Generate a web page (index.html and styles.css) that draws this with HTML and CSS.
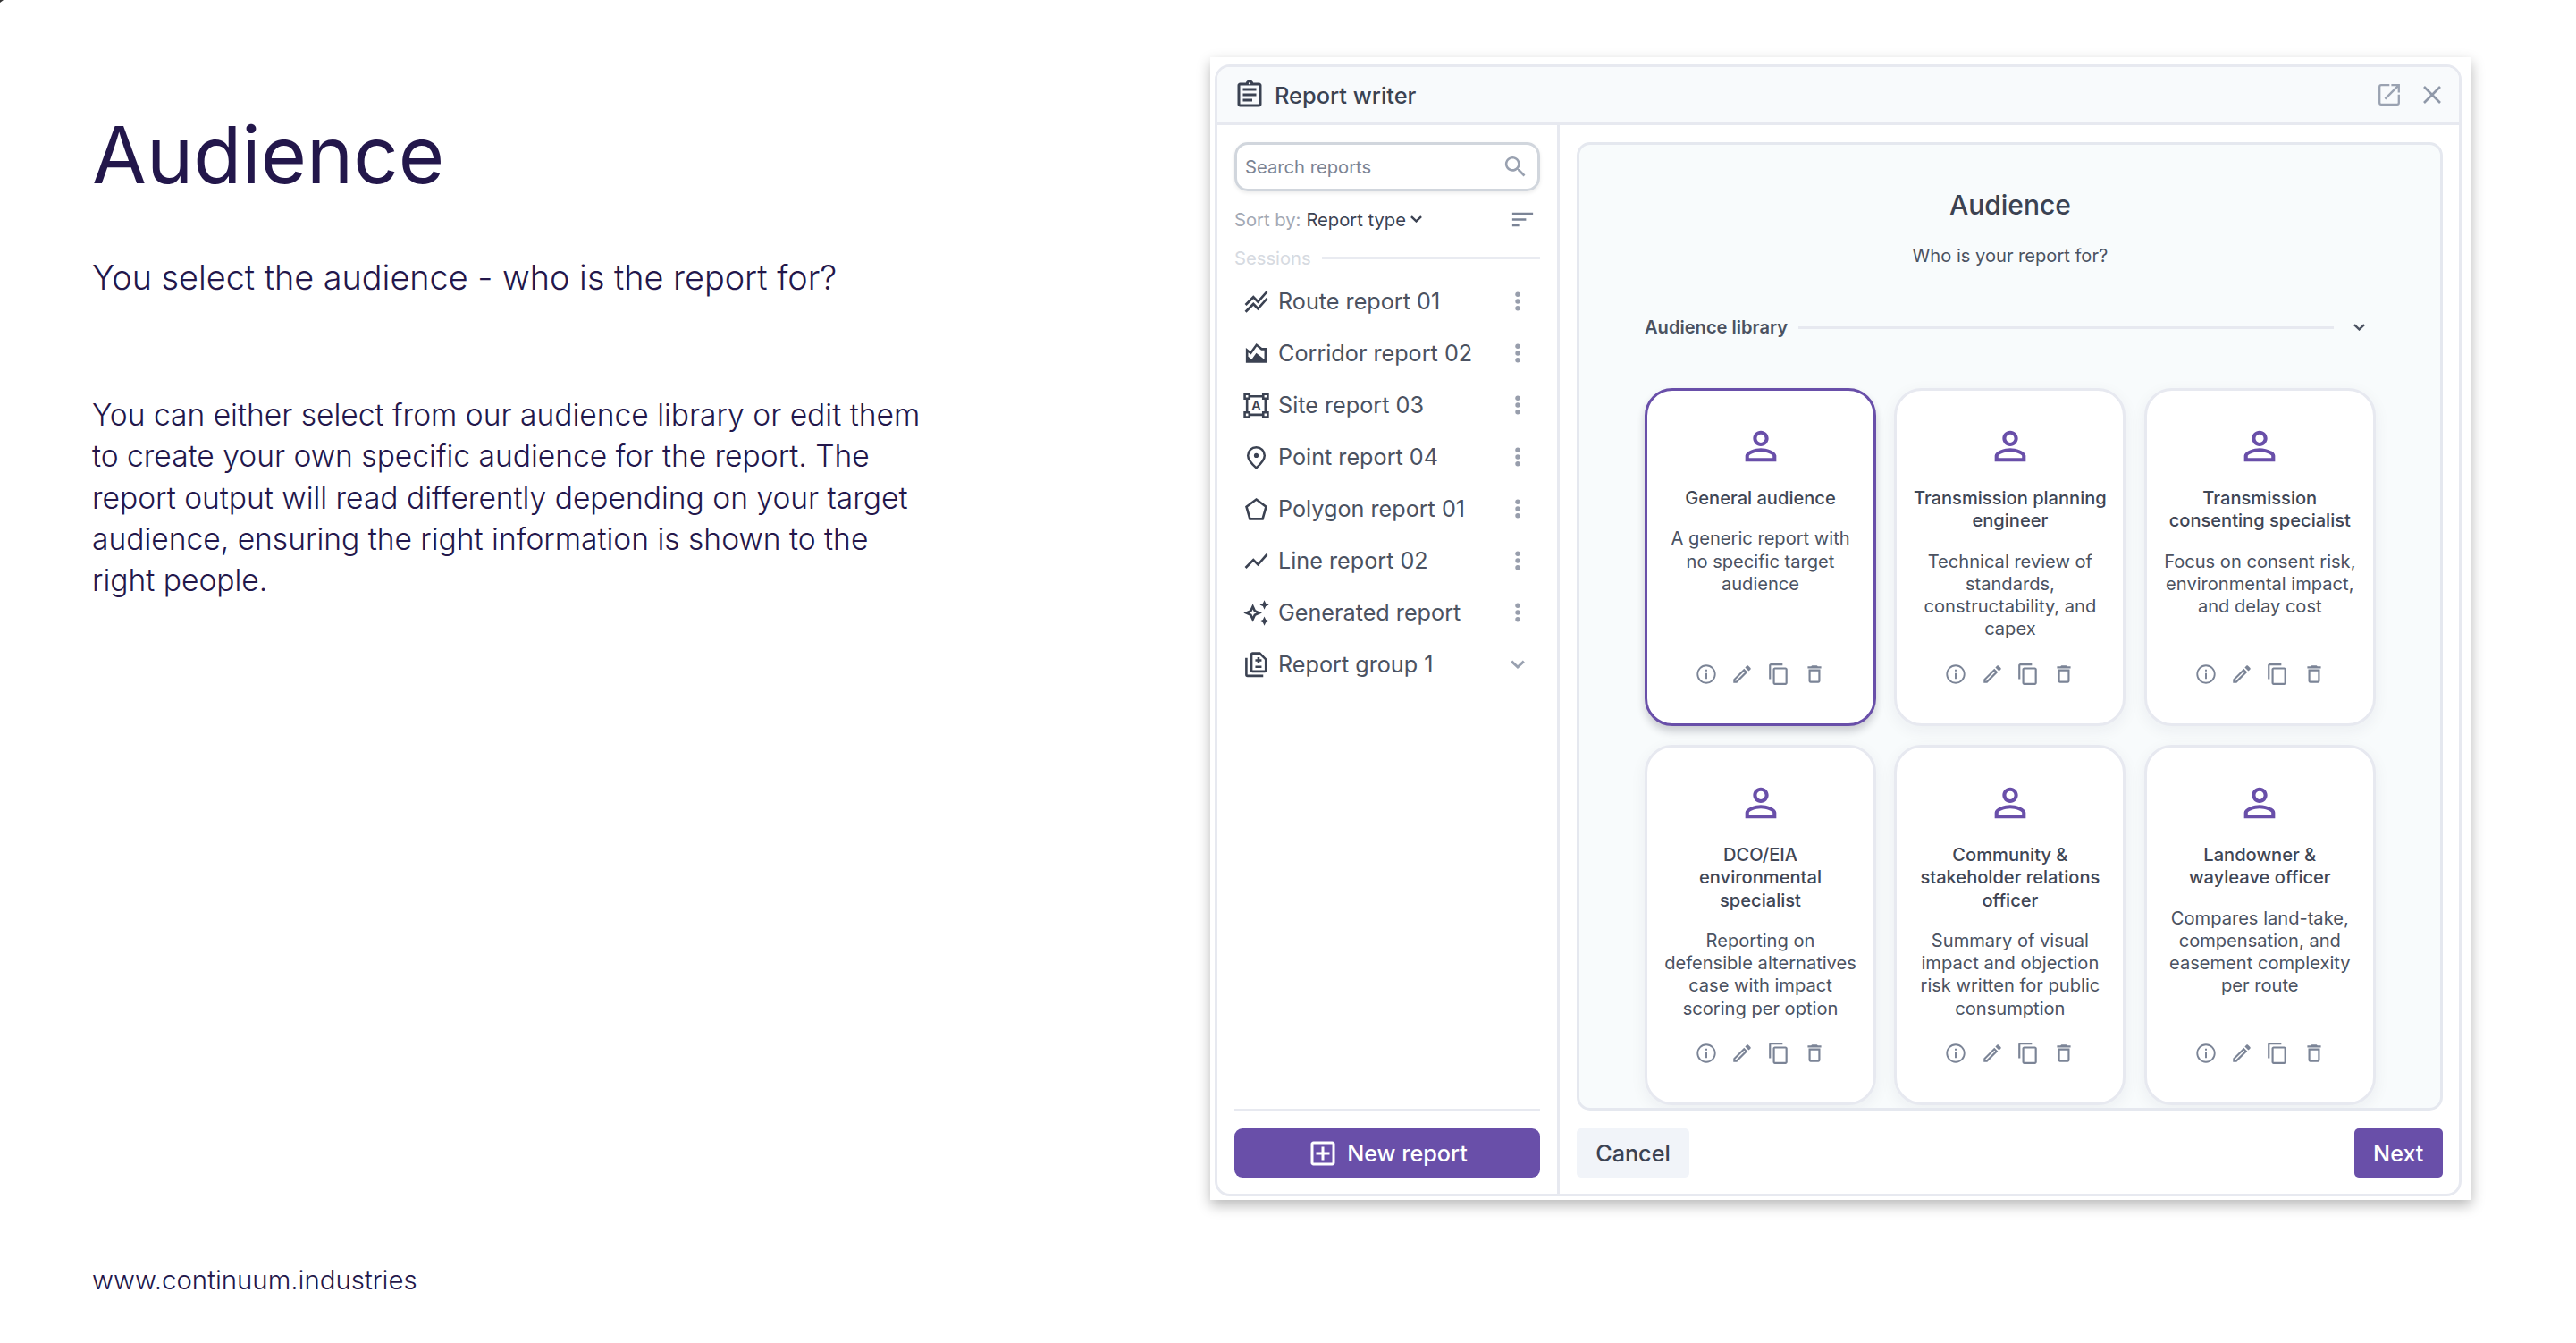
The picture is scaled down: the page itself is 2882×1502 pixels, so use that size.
FILE: index.html
```html
<!DOCTYPE html>
<html lang="en">
  <head>
    <meta charset="UTF-8" />
    <meta name="viewport" content="width=device-width, initial-scale=1.0" />
    <title>Audience</title>
    <link rel="stylesheet" href="styles.css">
  </head>
  <body>
    <!-- icon set -->
    <svg class="sprite" xmlns="http://www.w3.org/2000/svg">
      <symbol id="clipboard" viewBox="0 0 24 24"><path d="M7 15h7v2H7zm0-4h10v2H7zm0-4h10v2H7z"/><path d="M19 3h-4.18C14.4 1.84 13.3 1 12 1s-2.4.84-2.82 2H5c-1.1 0-2 .9-2 2v14c0 1.1.9 2 2 2h14c1.1 0 2-.9 2-2V5c0-1.1-.9-2-2-2zm-7-.25c.41 0 .75.34.75.75s-.34.75-.75.75-.75-.34-.75-.75.34-.75.75-.75zM19 19H5V5h14v14z"/></symbol>
      <symbol id="open" viewBox="0 0 24 24"><path class="line" stroke-width="2.3" d="M12.3 1.2H3Q1.2 1.2 1.2 3v18q0 1.8 1.8 1.8h18q1.8 0 1.8-1.8v-9.3M14.4 1.2h8.4v8.2M22.6 1.4 7.4 16.6"/></symbol>
      <symbol id="close" viewBox="0 0 24 24"><path class="line" stroke-width="2.6" d="M3 3l18 18M21 3 3 21"/></symbol>
      <symbol id="search" viewBox="0 0 24 24"><path d="M15.5 14h-.79l-.28-.27C15.41 12.59 16 11.11 16 9.5 16 5.91 13.09 3 9.5 3S3 5.91 3 9.5 5.91 16 9.5 16c1.61 0 3.09-.59 4.23-1.57l.27.28v.79l5 4.99L20.49 19l-4.99-5zm-6 0C7.01 14 5 11.99 5 9.5S7.01 5 9.5 5 14 7.01 14 9.5 11.99 14 9.5 14z"/></symbol>
      <symbol id="sort" viewBox="0 0 24 24"><path d="M3 18h6v-2H3v2zM3 6v2h18V6H3zm0 7h12v-2H3v2z"/></symbol>
      <symbol id="chevron" viewBox="0 0 14 8"><path class="line" stroke-width="2.6" d="M1 1l6 5.6L13 1"/></symbol>
      <symbol id="route" viewBox="0 0 24 24"><path d="M2 19.99l7.5-7.51 4 4 7.09-7.97L22 9.92l-8.5 9.56-4-4-6 6.01-1.5-1.5zm1.5-4.5l6-6.01 4 4L22 3.92l-1.41-1.41-7.09 7.97-4-4L2 13.99l1.5 1.5z"/></symbol>
      <symbol id="corridor" viewBox="0 0 24 24"><path d="M17 7l-5-4-5 7-4-3v13h18V7h-4zm2 9.95l-7-5.45L8 17l-3-2.4V11l2.44 1.83 4.96-6.95L16.3 9H19v7.95z"/></symbol>
      <symbol id="site" viewBox="0 0 24 24"><path d="M23 7V1h-6v2H7V1H1v6h2v10H1v6h6v-2h10v2h6v-6h-2V7h2zM3 3h2v2H3V3zm2 18H3v-2h2v2zm12-2H7v-2H5V7h2V5h10v2h2v10h-2v2zm4 2h-2v-2h2v2zM19 5V3h2v2h-2z"/><text class="icon-letter" x="12" y="16.2" text-anchor="middle">A</text></symbol>
      <symbol id="point" viewBox="0 0 24 24"><path class="line" stroke-width="1.9" d="M12 21.2c-4.6-4-7.2-7.2-7.2-10.7a7.2 7.2 0 0 1 14.4 0c0 3.5-2.6 6.7-7.2 10.7z"/><circle cx="12" cy="10.4" r="2"/></symbol>
      <symbol id="polygon" viewBox="0 0 24 24"><path class="line" stroke-width="2" d="M12 3.5l8.5 6.3-3 10.6h-11L3.5 9.8z"/></symbol>
      <symbol id="trend" viewBox="0 0 24 24"><path d="M3.5 18.49l6-6.01 4 4L22 6.92l-1.41-1.41-7.09 7.97-4-4L2 16.99z"/></symbol>
      <symbol id="sparkle" viewBox="0 0 24 24"><path d="M19 9l1.25-2.75L23 5l-2.75-1.25L19 1l-1.25 2.75L15 5l2.75 1.25zm0 6l-1.25 2.75L15 19l2.75 1.25L19 23l1.25-2.75L23 19l-2.75-1.25zm-7.5-5.5L9 4 6.5 9.5 1 12l5.5 2.5L9 20l2.5-5.5L17 12l-5.5-2.5zm-1.51 3.49L9 15.17l-.99-2.18L5.83 12l2.18-.99L9 8.83l.99 2.18 2.18.99-2.18.99z"/></symbol>
      <symbol id="group" viewBox="0 0 24 24"><path class="line" stroke-width="2" d="M15 2H8.8a1 1 0 0 0-1 1v13.7a1 1 0 0 0 1 1h10.5a1 1 0 0 0 1-1V7.3zM3.4 6v14.6q0 1 1 1H18M13.9 5.4v5.4M11.2 8.1h5.4M11.2 13.8h5.4"/></symbol>
      <symbol id="dots" viewBox="0 0 8 24"><circle cx="4" cy="4.2" r="2.7"/><circle cx="4" cy="12" r="2.7"/><circle cx="4" cy="19.8" r="2.7"/></symbol>
      <symbol id="plus" viewBox="0 0 24 24"><path d="M19 3H5c-1.1 0-2 .9-2 2v14c0 1.1.9 2 2 2h14c1.1 0 2-.9 2-2V5c0-1.1-.9-2-2-2zm0 16H5V5h14v14zm-8-2h2v-4h4v-2h-4V7h-2v4H7v2h4z"/></symbol>
      <symbol id="person" viewBox="0 0 24 24"><path d="M12 5.9c1.16 0 2.1.94 2.1 2.1s-.94 2.1-2.1 2.1S9.9 9.16 9.9 8s.94-2.1 2.1-2.1m0 9c2.97 0 6.1 1.46 6.1 2.1v1.1H5.9V17c0-.64 3.13-2.1 6.1-2.1M12 4C9.79 4 8 5.79 8 8s1.79 4 4 4 4-1.79 4-4-1.79-4-4-4zm0 9c-2.67 0-8 1.34-8 4v3h16v-3c0-2.66-5.33-4-8-4z"/></symbol>
      <symbol id="info" viewBox="0 0 24 24"><circle class="line" stroke-width="1.7" cx="12" cy="12" r="9"/><path d="M11.1 7.2h1.8v1.9h-1.8zM11.1 10.8h1.8v6h-1.8z"/></symbol>
      <symbol id="edit" viewBox="0 0 24 24"><path d="M14.06 9.02l.92.92L5.92 19H5v-.92l9.06-9.06M17.66 3c-.25 0-.51.1-.7.29l-1.83 1.83 3.75 3.75 1.83-1.83c.39-.39.39-1.02 0-1.41l-2.34-2.34c-.2-.2-.45-.29-.71-.29zm-3.6 3.19L3 17.25V21h3.75L17.81 9.94l-3.75-3.75z"/></symbol>
      <symbol id="copy" viewBox="0 0 24 24"><path d="M16 1H4c-1.1 0-2 .9-2 2v14h2V3h12V1zm3 4H8c-1.1 0-2 .9-2 2v14c0 1.1.9 2 2 2h11c1.1 0 2-.9 2-2V7c0-1.1-.9-2-2-2zm0 16H8V7h11v14z"/></symbol>
      <symbol id="trash" viewBox="0 0 24 24"><path d="M6 19c0 1.1.9 2 2 2h8c1.1 0 2-.9 2-2V7H6v12zM8 9h8v10H8V9zm7.5-5l-1-1h-5l-1 1H5v2h14V4z"/></symbol>
    </svg>

    <div class="slide">
      <div class="corner"></div>
      <div class="intro">
        <h1>Audience</h1>
        <p class="lead">You select the audience - who is the report for?</p>
        <p class="body">You can either select from our audience library or edit them<br>to create your own specific audience for the report. The<br>report output will read differently depending on your target<br>audience, ensuring the right information is shown to the<br>right people.</p>
        <p class="site">www.continuum.industries</p>
      </div>

      <div class="frame">
        <div class="window">
          <div class="header">
            <svg class="icon-title"><use href="#clipboard"/></svg>
            <span class="header-title">Report writer</span>
            <svg class="icon-open"><use href="#open"/></svg>
            <svg class="icon-close"><use href="#close"/></svg>
          </div>

          <div class="sidebar">
            <div class="search"><span>Search reports</span><svg><use href="#search"/></svg></div>
            <div class="sort">
              <span class="sort-label">Sort by:</span>
              <span class="sort-value">Report type</span>
              <svg class="sort-chevron"><use href="#chevron"/></svg>
              <svg class="sort-icon"><use href="#sort"/></svg>
            </div>
            <div class="sessions"><span>Sessions</span></div>
            <ul class="reports">
              <li><svg><use href="#route"/></svg><span>Route report 01</span><svg class="dots"><use href="#dots"/></svg></li>
              <li><svg><use href="#corridor"/></svg><span>Corridor report 02</span><svg class="dots"><use href="#dots"/></svg></li>
              <li><svg><use href="#site"/></svg><span>Site report 03</span><svg class="dots"><use href="#dots"/></svg></li>
              <li><svg><use href="#point"/></svg><span>Point report 04</span><svg class="dots"><use href="#dots"/></svg></li>
              <li><svg><use href="#polygon"/></svg><span>Polygon report 01</span><svg class="dots"><use href="#dots"/></svg></li>
              <li><svg><use href="#trend"/></svg><span>Line report 02</span><svg class="dots"><use href="#dots"/></svg></li>
              <li><svg><use href="#sparkle"/></svg><span>Generated report</span><svg class="dots"><use href="#dots"/></svg></li>
              <li><svg><use href="#group"/></svg><span>Report group 1</span><svg class="expand"><use href="#chevron"/></svg></li>
            </ul>
            <div class="sidebar-footer">
              <button class="btn new-report"><svg><use href="#plus"/></svg><span>New report</span></button>
            </div>
          </div>

          <div class="main">
            <div class="content">
              <h2>Audience</h2>
              <p class="question">Who is your report for?</p>
              <div class="library">
                <span>Audience library</span>
                <svg><use href="#chevron"/></svg>
              </div>
              <div class="cards">
                <div class="card selected">
                  <svg class="person"><use href="#person"/></svg>
                  <h3>General audience</h3>
                  <p>A generic report with<br>no specific target<br>audience</p>
                  <div class="actions"><svg><use href="#info"/></svg><svg><use href="#edit"/></svg><svg><use href="#copy"/></svg><svg><use href="#trash"/></svg></div>
                </div>
                <div class="card">
                  <svg class="person"><use href="#person"/></svg>
                  <h3>Transmission planning<br>engineer</h3>
                  <p>Technical review of<br>standards,<br>constructability, and<br>capex</p>
                  <div class="actions"><svg><use href="#info"/></svg><svg><use href="#edit"/></svg><svg><use href="#copy"/></svg><svg><use href="#trash"/></svg></div>
                </div>
                <div class="card">
                  <svg class="person"><use href="#person"/></svg>
                  <h3>Transmission<br>consenting specialist</h3>
                  <p>Focus on consent risk,<br>environmental impact,<br>and delay cost</p>
                  <div class="actions"><svg><use href="#info"/></svg><svg><use href="#edit"/></svg><svg><use href="#copy"/></svg><svg><use href="#trash"/></svg></div>
                </div>
                <div class="card">
                  <svg class="person"><use href="#person"/></svg>
                  <h3>DCO/EIA<br>environmental<br>specialist</h3>
                  <p>Reporting on<br>defensible alternatives<br>case with impact<br>scoring per option</p>
                  <div class="actions"><svg><use href="#info"/></svg><svg><use href="#edit"/></svg><svg><use href="#copy"/></svg><svg><use href="#trash"/></svg></div>
                </div>
                <div class="card">
                  <svg class="person"><use href="#person"/></svg>
                  <h3>Community &amp;<br>stakeholder relations<br>officer</h3>
                  <p>Summary of visual<br>impact and objection<br>risk written for public<br>consumption</p>
                  <div class="actions"><svg><use href="#info"/></svg><svg><use href="#edit"/></svg><svg><use href="#copy"/></svg><svg><use href="#trash"/></svg></div>
                </div>
                <div class="card">
                  <svg class="person"><use href="#person"/></svg>
                  <h3>Landowner &amp;<br>wayleave officer</h3>
                  <p>Compares land-take,<br>compensation, and<br>easement complexity<br>per route</p>
                  <div class="actions"><svg><use href="#info"/></svg><svg><use href="#edit"/></svg><svg><use href="#copy"/></svg><svg><use href="#trash"/></svg></div>
                </div>
              </div>
            </div>
            <div class="main-footer">
              <button class="btn cancel">Cancel</button>
              <button class="btn next">Next</button>
            </div>
          </div>
        </div>
      </div>
    </div>
  </body>
</html>
```

FILE: styles.css
```css
* {
  box-sizing: border-box;
}
body {
  margin: 0;
  background-color: #fff;
  font-family: Inter, "Liberation Sans", sans-serif;
  color: #4b5261;
}
h1, h2, h3, p, ul {
  margin: 0;
  padding: 0;
}
svg {
  display: block;
  flex: none;
  fill: currentColor;
}
.sprite {
  position: absolute;
  width: 0;
  height: 0;
}
.line {
  fill: none;
  stroke: currentColor;
}
.icon-letter {
  font-size: 11.5px;
  font-weight: 600;
}
.slide {
  position: relative;
  display: flex;
  width: 2882px;
  height: 1502px;
  overflow: hidden;
}
.corner {
  position: absolute;
  left: 0;
  top: 0;
  border-top: 3px solid #333;
  border-right: 4px solid transparent;
}

/* left text */
.intro {
  display: flex;
  flex-direction: column;
  width: 1354px;
  padding: 119px 0 50px 103px;
  color: #23174b;
}
h1 {
  font-size: 88.3px;
  font-weight: 400;
  line-height: 108px;
}
.lead {
  margin-top: 60px;
  font-size: 37.8px;
  font-weight: 300;
  line-height: 46px;
}
.body {
  margin-top: 108px;
  font-size: 33.6px;
  font-weight: 300;
  line-height: 46.3px;
}
.site {
  margin-top: auto;
  font-size: 29.4px;
  font-weight: 300;
  line-height: 40px;
}

/* report window */
.frame {
  width: 1411px;
  height: 1278px;
  margin-top: 64px;
  padding: 8px 11px 4px 5px;
  box-shadow: 0 6px 14px rgba(0, 0, 0, 0.28);
}
.window {
  display: grid;
  grid-template-columns: 383px 1fr;
  grid-template-rows: 65px 1fr;
  height: 100%;
  border: 3px solid #e7e9f0;
  border-radius: 17px;
  overflow: hidden;
}
.header {
  grid-column: 1 / 3;
  display: flex;
  align-items: center;
  padding: 0 19px 0 18px;
  border-bottom: 3px solid #e7e9f0;
  background-color: #f8fafc;
}
.icon-title {
  width: 36px;
  height: 36px;
  color: #3b4252;
}
.header-title {
  margin-left: 10px;
  font-size: 25.4px;
  font-weight: 500;
  color: #3b4252;
}
.icon-open {
  width: 24px;
  height: 24px;
  margin-left: auto;
  margin-right: 24px;
  color: #9aa2b1;
}
.icon-close {
  width: 24px;
  height: 24px;
  color: #8f98a9;
}

/* sidebar */
.sidebar {
  display: flex;
  flex-direction: column;
  padding: 19px 19px 18px;
  border-right: 3px solid #e7e9f0;
}
.search {
  display: flex;
  align-items: center;
  justify-content: space-between;
  height: 55px;
  padding: 0 9px;
  border: 3px solid #d1d6dd;
  border-radius: 15px;
  box-shadow: 0 2px 4px rgba(0, 0, 0, 0.08);
  font-size: 20.2px;
  color: #7b8393;
}
.search svg {
  width: 31px;
  height: 31px;
  color: #99a1b0;
}
.sort {
  display: flex;
  align-items: center;
  height: 40px;
  margin-top: 11px;
  font-size: 20.2px;
}
.sort-label {
  color: #a2a8b4;
}
.sort-value {
  margin-left: 6px;
  color: #3b4252;
}
.sort-chevron {
  width: 13px;
  height: 8px;
  margin-left: 5px;
  color: #3b4252;
}
.sort-icon {
  width: 31px;
  height: 31px;
  margin-left: auto;
  margin-right: 4px;
  color: #7b8496;
}
.sessions {
  display: flex;
  align-items: center;
  gap: 12px;
  height: 40px;
  margin-top: 3px;
  font-size: 20.2px;
  color: #d6dae1;
}
.sessions::after {
  content: "";
  flex: 1;
  height: 3px;
  background-color: #e9ebf1;
}
.reports {
  list-style: none;
}
.reports li {
  display: flex;
  align-items: center;
  height: 58px;
  padding-left: 9px;
  padding-right: 21px;
  font-size: 25.2px;
}
.reports svg {
  width: 31px;
  height: 31px;
  color: #3b4252;
}
.reports span {
  flex: 1;
  margin-left: 9px;
}
.reports .dots {
  width: 8px;
  height: 24px;
  color: #989eac;
}
.reports .expand {
  width: 16px;
  height: 10px;
  margin-right: -4px;
  color: #99a1b0;
}
.sidebar-footer {
  margin-top: auto;
  padding-top: 19px;
  border-top: 3px solid #e7e9f0;
}
.btn {
  display: flex;
  align-items: center;
  justify-content: center;
  height: 55px;
  padding: 0;
  border: none;
  font-family: inherit;
  font-size: 25.2px;
  font-weight: 500;
}
.new-report {
  width: 100%;
  border-radius: 9px;
  background-color: #694fa9;
  color: #fff;
}
.new-report svg {
  width: 36px;
  height: 36px;
  margin-right: 9px;
}

/* main area */
.main {
  display: flex;
  flex-direction: column;
  justify-content: space-between;
  padding: 19px 19px 18px;
}
.content {
  height: 1083px;
  padding: 43px 72px 0 73px;
  border: 3px solid #e5e8ef;
  border-radius: 15px;
  background-color: #f8fbfc;
  overflow: hidden;
}
h2 {
  font-size: 30px;
  font-weight: 500;
  line-height: 48px;
  text-align: center;
  color: #3b4252;
}
.question {
  margin-top: 13px;
  font-size: 20.1px;
  line-height: 40px;
  text-align: center;
}
.library {
  display: flex;
  align-items: center;
  height: 40px;
  margin-top: 40px;
  padding-right: 12px;
  font-size: 20.1px;
  font-weight: 600;
}
.library::before {
  content: "";
  order: 1;
  flex: 1;
  height: 3px;
  margin-left: 12px;
  margin-right: 22px;
  background-color: #e7e9f0;
}
.library svg {
  order: 2;
  width: 13px;
  height: 8px;
}
.cards {
  display: grid;
  grid-template-columns: repeat(3, 259px);
  grid-template-rows: 378px 403px;
  gap: 21px 20.4px;
  margin-top: 48px;
}
.card {
  display: flex;
  flex-direction: column;
  align-items: center;
  padding: 36px 0 42px;
  border: 3px solid #e7e9f0;
  border-radius: 31px;
  background-color: #fff;
  box-shadow: 0 5px 18px rgba(30, 40, 60, 0.06);
  text-align: center;
}
.card.selected {
  border-color: #694fa9;
  box-shadow: 0 6px 10px rgba(20, 20, 40, 0.2);
}
.person {
  width: 52px;
  height: 52px;
  color: #694fa9;
}
.card h3 {
  margin-top: 20px;
  font-size: 20.1px;
  font-weight: 500;
  line-height: 25.3px;
  color: #3f4655;
}
.card p {
  margin-top: 20px;
  font-size: 20.1px;
  line-height: 25.3px;
}
.actions {
  display: flex;
  gap: 14.3px;
  margin-top: auto;
  color: #7b8496;
}
.actions svg {
  width: 26px;
  height: 26px;
}
.main-footer {
  display: flex;
  justify-content: space-between;
}
.cancel {
  width: 126px;
  border-radius: 5px;
  background-color: #f1f4f9;
  color: #3b4252;
}
.next {
  width: 99px;
  border-radius: 5px;
  background-color: #694fa9;
  color: #fff;
}
```
